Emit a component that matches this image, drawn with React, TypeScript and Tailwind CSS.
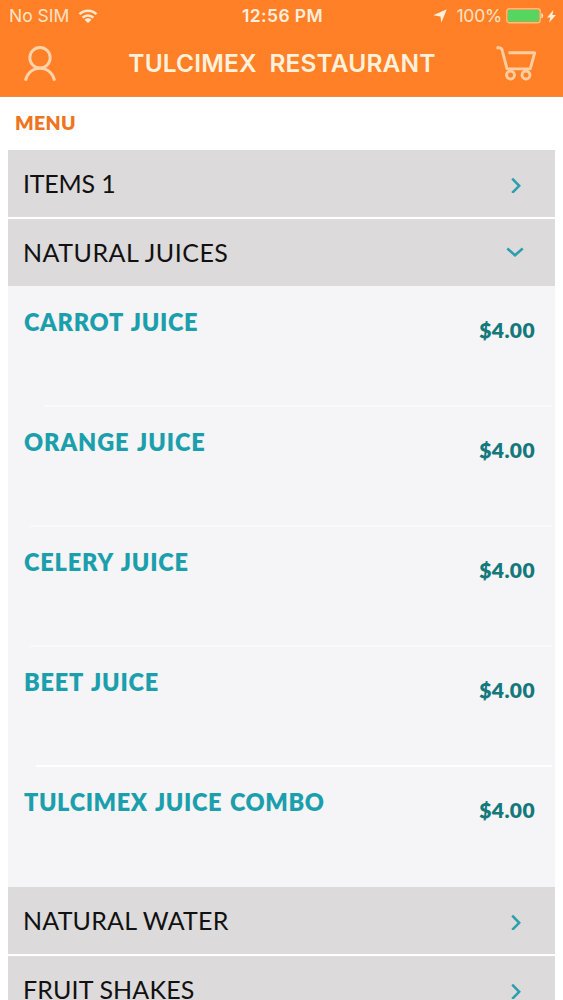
import React from 'react';

interface MenuItem {
  name: string;
  price: string;
  tracking: string;
  divider?: string;
}

interface MenuSection {
  title: string;
  tracking: string;
  items?: MenuItem[];
}

const sections: MenuSection[] = [
  { title: 'ITEMS 1', tracking: 'tracking-[-0.2px]' },
  {
    title: 'NATURAL JUICES',
    tracking: 'tracking-[0.5px]',
    items: [
      { name: 'CARROT JUICE', price: '$4.00', tracking: 'tracking-[0.7px]', divider: 'ml-[36px] bg-[#faf9fb]' },
      { name: 'ORANGE JUICE', price: '$4.00', tracking: 'tracking-[0.9px]', divider: 'ml-[22px] bg-[#f9f8fa]' },
      { name: 'CELERY JUICE', price: '$4.00', tracking: 'tracking-[0.85px]', divider: 'ml-[22px] bg-[#f9f8fa]' },
      { name: 'BEET JUICE', price: '$4.00', tracking: 'tracking-[0.8px]', divider: 'ml-[28px] bg-[#fefefe]' },
      { name: 'TULCIMEX JUICE COMBO', price: '$4.00', tracking: 'tracking-[0.6px]' },
    ],
  },
  { title: 'NATURAL WATER', tracking: 'tracking-[0.2px]' },
  { title: 'FRUIT SHAKES', tracking: 'tracking-[0.15px]' },
];

const WifiIcon = () => (
  <svg width="20" height="14" viewBox="0 0 20 14" fill="none" stroke="#ffe9cf" strokeWidth="2.5">
    <path d="M1.5 5.2a12 12 0 0 1 17 0" />
    <path d="M4.6 8.7a7.6 7.6 0 0 1 10.8 0" />
    <path d="M10 14 6.5 10.7a4.9 4.9 0 0 1 7 0z" fill="#ffe9cf" stroke="none" />
  </svg>
);

const LocationArrow = () => (
  <svg width="14" height="14" viewBox="0 0 14 14" fill="#fff0dc">
    <path d="M13.8.3 8.4 13.6 7.4 7.6.3 6.2z" />
  </svg>
);

const BatteryIcon = () => (
  <svg width="38" height="16" viewBox="0 0 38 16">
    <rect x="0.8" y="0.8" width="33.4" height="14" rx="2.5" fill="none" stroke="#ffbd80" strokeWidth="1.4" />
    <rect x="2" y="2" width="31" height="11.6" rx="1.3" fill="#54d660" />
    <path d="M35.3 5a3 3 0 0 1 0 5.6z" fill="#ffe3c4" />
  </svg>
);

const BoltIcon = () => (
  <svg width="9" height="13" viewBox="0 0 9 13" fill="#ffeed8">
    <path d="M6.4.1.1 7.4h3.2l-1.2 5.4 6.8-7.8H5.4z" />
  </svg>
);

const UserIcon = () => (
  <svg width="34" height="36" viewBox="0 0 34 36" fill="none" stroke="#ffd3aa" strokeWidth="2.9">
    <circle cx="17" cy="11.7" r="10.2" />
    <path d="M2.4 34.6C3.9 27.5 9.4 22.2 17 22.2s13.1 5.3 14.6 12.4" />
  </svg>
);

const CartIcon = () => (
  <svg width="41" height="36" viewBox="0 0 41 36" fill="none" stroke="#ffcda0" strokeWidth="2.9" strokeLinejoin="round">
    <path d="M.5 1.8h3c1.3 0 2 .6 2.5 1.8l5 19.3h23.2L38.7 6.8H12.5" />
    <circle cx="14.5" cy="29" r="4" />
    <circle cx="30" cy="29" r="4" />
  </svg>
);

const Chevron: React.FC<{ open: boolean }> = ({ open }) => (
  <svg width="18" height="18" viewBox="0 0 18 18" fill="none" stroke="#2b9fae" strokeWidth="2.5">
    {open ? <path d="M1.3 4.5 9 11.3l7.7-6.8" /> : <path d="m6.2 3.6 7 7.2-7 7.1" />}
  </svg>
);

const StatusBar = () => (
  <div className="flex h-8 items-center pl-[9px] pr-[7px] font-[Inter,sans-serif] text-[17.5px] leading-none text-[#ffe3c6]">
    <div className="flex flex-1 items-center gap-[9px]">
      <span>No SIM</span>
      <WifiIcon />
    </div>
    <span className="font-semibold tracking-[0.4px] text-[#ffeedb]">12:56 PM</span>
    <div className="flex flex-1 items-center justify-end">
      <LocationArrow />
      <span className="ml-[9px] mr-[4px] tracking-[-0.2px]">100%</span>
      <BatteryIcon />
      <span className="ml-[3px]">
        <BoltIcon />
      </span>
    </div>
  </div>
);

const Header = () => (
  <header className="h-[97px] border-b border-[#ee8b49] bg-[#ff8027]">
    <StatusBar />
    <div className="flex h-[63px] items-center justify-between pl-[23px] pr-[26px]">
      <UserIcon />
      <h1 className="whitespace-pre pl-[11px] font-[Inter,sans-serif] text-[24.5px] font-semibold leading-none tracking-[0.15px] text-[#fff1dc]">
        {'TULCIMEX  RESTAURANT'}
      </h1>
      <CartIcon />
    </div>
  </header>
);

const ItemRow: React.FC<{ item: MenuItem }> = ({ item }) => (
  <li className="flex h-[120px] flex-col justify-between">
    <div className="flex justify-between pl-4 pr-[20px]">
      <span className={`pt-[19px] text-[23.5px] leading-8 font-extrabold [word-spacing:2px] text-[#1b9fac] ${item.tracking}`}>
        {item.name}
      </span>
      <span className="pt-[27px] text-[21px] leading-8 font-extrabold tracking-[0.4px] text-[#14787c]">{item.price}</span>
    </div>
    {item.divider && <div className={`mr-[3px] h-[2px] ${item.divider}`} />}
  </li>
);

const Section: React.FC<{ section: MenuSection }> = ({ section }) => (
  <section>
    <button className="flex h-[67px] w-full items-center justify-between bg-[#dcdadb] pl-[15px] pr-[31px]">
      <span className={`pb-[1px] text-[25px] leading-8 text-[#111] ${section.tracking}`}>{section.title}</span>
      <Chevron open={!!section.items} />
    </button>
    {section.items && (
      <ul className="mb-[-2px] bg-[#f5f4f6] pt-px">
        {section.items.map(item => (
          <ItemRow key={item.name} item={item} />
        ))}
      </ul>
    )}
  </section>
);

export default function App() {
  return (
    <div className="h-[1000px] w-full overflow-hidden bg-white font-[Lato,sans-serif]">
      <Header />
      <main className="px-2">
        <h2 className="h-[53px] pl-[7px] pt-[10px] text-[19.5px] leading-8 font-extrabold tracking-[0.3px] text-[#ee7421]">MENU</h2>
        <div className="flex flex-col gap-[2px]">
          {sections.map(section => (
            <Section key={section.title} section={section} />
          ))}
        </div>
      </main>
    </div>
  );
}
